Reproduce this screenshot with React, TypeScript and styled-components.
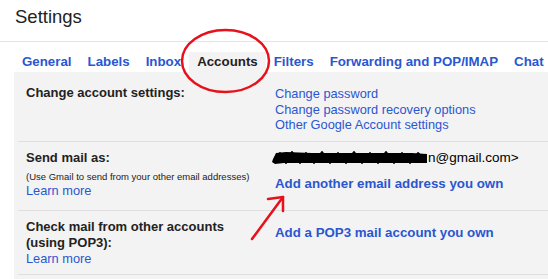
import React from 'react';
import styled, { createGlobalStyle } from 'styled-components';

const GlobalStyle = createGlobalStyle`
  html, body {
    margin: 0;
    padding: 0;
    background: #fff;
    overflow: hidden;
  }
  body {
    font-family: "Liberation Sans", Arial, sans-serif;
    color: #222;
  }
`;

const BLUE = '#2a57d0';

const Page = styled.div`
  position: relative;
  width: 548px;
  height: 279px;
  overflow: hidden;
`;

const Header = styled.header`
  height: 42px;
  box-sizing: border-box;
  padding: 6px 15px 0;
  border-bottom: 1px solid #e3e3e3;
`;

const Title = styled.h1`
  margin: 0;
  font-size: 18.5px;
  line-height: 21px;
  font-weight: normal;
  color: #222;
`;

const TabBar = styled.nav`
  display: flex;
  margin-left: 14px;
  padding-top: 10px;
  white-space: nowrap;
`;

const Tab = styled.a<{ $active?: boolean }>`
  display: block;
  height: 20px;
  line-height: 20px;
  padding: 0 8px;
  font-size: 13.3px;
  font-weight: bold;
  text-decoration: none;
  color: ${p => (p.$active ? '#222' : BLUE)};
  background: ${p => (p.$active ? '#f3f3f3' : 'transparent')};
`;

const Panel = styled.section`
  margin-left: 14px;
  padding-top: 5px;
  background: #f3f3f3;
  height: 300px;
`;

const Row = styled.div<{ $pb?: number }>`
  display: grid;
  grid-template-columns: 257px 1fr;
  margin-left: 4px;
  padding: 8px 0 ${p => p.$pb ?? 8}px;
  border-bottom: 1px solid #e0e0e0;
`;

const LabelCell = styled.div`
  padding-left: 8px;
`;

const Label = styled.div`
  font-size: 13px;
  line-height: 16px;
  font-weight: bold;
  color: #222;
`;

const Note = styled.div`
  margin-top: 5px;
  font-size: 9.5px;
  line-height: 12px;
  color: #222;
`;

const Link = styled.a`
  display: block;
  font-size: 12.8px;
  line-height: 15.5px;
  color: ${BLUE};
  text-decoration: none;
  white-space: nowrap;
`;

const LinkList = styled.div`
  padding-top: 1px;
`;

const ActionLink = styled.a<{ $mt?: number }>`
  display: block;
  margin-top: ${p => p.$mt ?? 0}px;
  font-size: 13.3px;
  line-height: 16px;
  font-weight: bold;
  color: ${BLUE};
  text-decoration: none;
  white-space: nowrap;
`;

const EmailLine = styled.div`
  display: flex;
  align-items: center;
  height: 16px;
  margin-left: -3px;
  white-space: nowrap;
`;

const Email = styled.span`
  font-size: 13.5px;
  line-height: 16px;
  color: #000;
`;

const Overlay = styled.svg`
  position: absolute;
  left: 0;
  top: 0;
  pointer-events: none;
`;

const Scribble = () => (
  <svg width="156" height="16" viewBox="0 0 156 16" style={{ flex: 'none' }}>
    <path
      d="M1 9 L4 3 L14 2 L40 3 L60 3 L80 3 L100 3 L120 3 L140 3 L155 4 L155 13 L140 13 L118 13 L96 13 L74 13 L50 13 L30 13 L12 13 L3 14 L0 12 Z"
      fill="#000"
    />
    <path
      d="M2 12 L8 3 L14 13 L20 2 L28 13 L34 3 L42 13 L50 2 L58 13 L66 3 L74 13 L82 2 L90 13 L98 3 L106 13 L114 2 L122 13 L130 3 L138 13 L146 3 L154 12"
      fill="none"
      stroke="#000"
      strokeWidth="2"
      strokeLinejoin="round"
    />
  </svg>
);

const tabs = ['General', 'Labels', 'Inbox', 'Accounts', 'Filters', 'Forwarding and POP/IMAP', 'Chat'];

export default function App() {
  return (
    <Page>
      <GlobalStyle />
      <Header>
        <Title>Settings</Title>
      </Header>
      <TabBar>
        {tabs.map(t => (
          <Tab key={t} $active={t === 'Accounts'}>
            {t}
          </Tab>
        ))}
      </TabBar>
      <Panel>
        <Row>
          <LabelCell>
            <Label>Change account settings:</Label>
          </LabelCell>
          <LinkList>
            <Link>Change password</Link>
            <Link>Change password recovery options</Link>
            <Link>Other Google Account settings</Link>
          </LinkList>
        </Row>
        <Row $pb={11.5}>
          <LabelCell>
            <Label>Send mail as:</Label>
            <Note>(Use Gmail to send from your other email addresses)</Note>
            <Link>Learn more</Link>
          </LabelCell>
          <div>
            <EmailLine>
              <Scribble />
              <Email>n@gmail.com&gt;</Email>
            </EmailLine>
            <ActionLink $mt={10}>Add another email address you own</ActionLink>
          </div>
        </Row>
        <Row>
          <LabelCell>
            <Label>Check mail from other accounts</Label>
            <Label>(using POP3):</Label>
            <Link>Learn more</Link>
          </LabelCell>
          <div>
            <ActionLink $mt={6}>Add a POP3 mail account you own</ActionLink>
          </div>
        </Row>
      </Panel>
      <Overlay width="548" height="279" viewBox="0 0 548 279">
        <ellipse cx="225.5" cy="61" rx="43.5" ry="31" fill="none" stroke="#e8101a" strokeWidth="2.5" />
        <path d="M252 239 L283 197" fill="none" stroke="#e8101a" strokeWidth="2.5" strokeLinecap="round" />
        <path d="M268 199 L283 197 L283 211" fill="none" stroke="#e8101a" strokeWidth="2.5" strokeLinecap="round" strokeLinejoin="round" />
      </Overlay>
    </Page>
  );
}
